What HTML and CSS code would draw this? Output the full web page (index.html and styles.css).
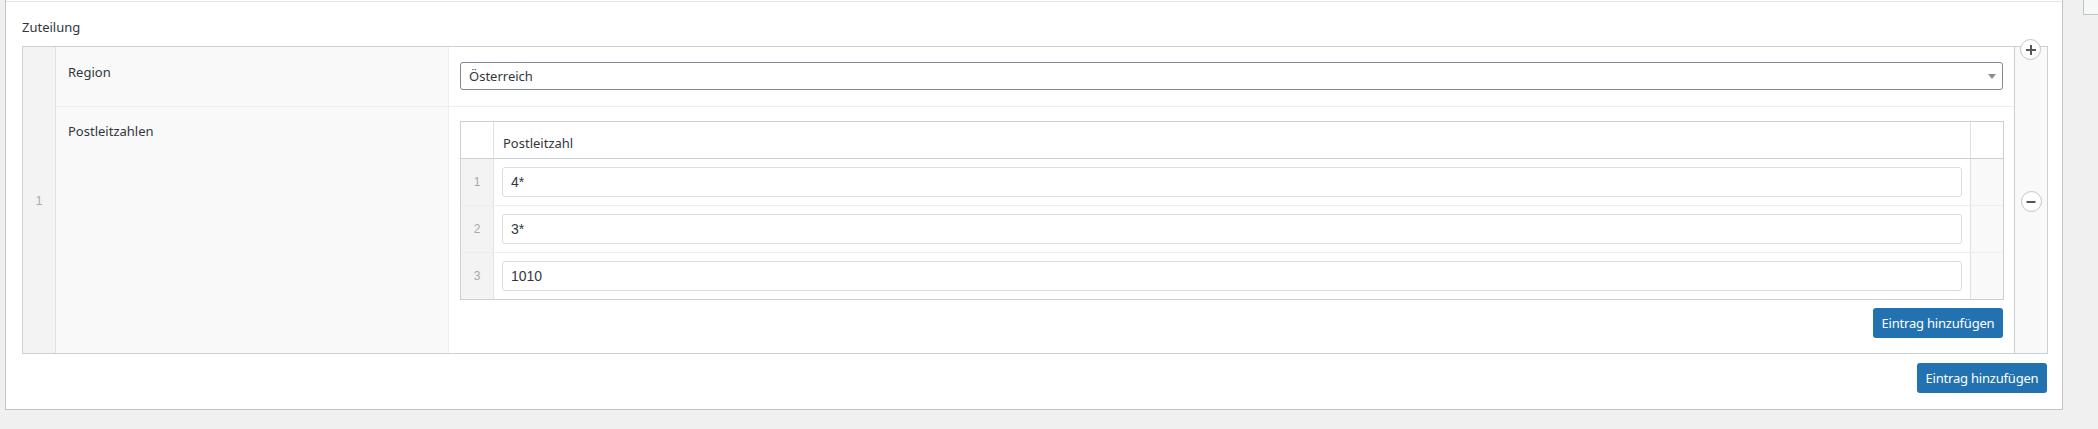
FILE: index.html
```html
<!DOCTYPE html>
<html lang="de">
<head>
    <meta charset="UTF-8">
    <title>Zuteilung</title>
    <link rel="stylesheet" href="styles.css">
</head>
<body>
    <div class="page">
        <div class="panel">
            <div class="panel-line"></div>
            <div class="field-label">Zuteilung</div>

            <div class="repeater">
                <div class="rep-num">1</div>

                <div class="rep-fields">
                    <div class="sub-row region-row">
                        <div class="sub-label">Region</div>
                        <div class="sub-input">
                            <div class="select-wrap">
                                <select class="select">
                                    <option>Österreich</option>
                                </select>
                            </div>
                        </div>
                    </div>

                    <div class="sub-row plz-row">
                        <div class="sub-label">Postleitzahlen</div>
                        <div class="sub-input">
                            <div class="inner-table">
                                <div class="inner-head">
                                    <div class="in-num"></div>
                                    <div class="in-cell head-cell">Postleitzahl</div>
                                    <div class="in-act"></div>
                                </div>
                                <div class="inner-row">
                                    <div class="in-num">1</div>
                                    <div class="in-cell"><input class="text-input" type="text" value="4*"></div>
                                    <div class="in-act"></div>
                                </div>
                                <div class="inner-row">
                                    <div class="in-num">2</div>
                                    <div class="in-cell"><input class="text-input" type="text" value="3*"></div>
                                    <div class="in-act"></div>
                                </div>
                                <div class="inner-row">
                                    <div class="in-num">3</div>
                                    <div class="in-cell"><input class="text-input" type="text" value="1010"></div>
                                    <div class="in-act"></div>
                                </div>
                            </div>
                            <div class="btn-bar">
                                <button class="btn">Eintrag hinzufügen</button>
                            </div>
                        </div>
                    </div>
                </div>

                <div class="rep-actions">
                    <span class="circle-btn add-btn">
                        <svg width="14" height="14" viewBox="0 0 14 14"><path d="M7 2v10M2 7h10" stroke="#50575e" stroke-width="2"/></svg>
                    </span>
                    <span class="circle-btn remove-btn">
                        <svg width="14" height="14" viewBox="0 0 14 14"><path d="M2.5 7h9" stroke="#50575e" stroke-width="2"/></svg>
                    </span>
                </div>
            </div>

            <div class="btn-bar outer-bar">
                <button class="btn">Eintrag hinzufügen</button>
            </div>
        </div>

        <div class="side-box"></div>
    </div>
</body>
</html>
```

FILE: styles.css
```css
* {
    margin: 0;
    padding: 0;
    box-sizing: border-box;
}

body {
    font-family: "Noto Sans", "Open Sans", sans-serif;
    font-size: 13px;
    line-height: 20px;
    color: #32373c;
    background: #f0f0f1;
    overflow: hidden;
}

.page {
    display: flex;
    align-items: flex-start;
    padding-left: 5px;
}

.panel {
    width: 2058px;
    flex-shrink: 0;
    background: #fff;
    border: 1px solid #c3c4c7;
    border-top: none;
    padding: 0 14px 16px 16px;
}

.panel-line {
    height: 1px;
    margin: 1px -14px 0 -16px;
    background: #e2e4e7;
}

.field-label {
    margin-top: 15px;
    margin-bottom: 9px;
}

/* repeater */
.repeater {
    display: flex;
    border: 1px solid #ccd0d4;
}

.rep-num {
    width: 33px;
    flex-shrink: 0;
    background: #f3f3f3;
    border-right: 1px solid #e1e1e1;
    display: flex;
    align-items: center;
    justify-content: center;
    padding-top: 2px;
    color: #aaa;
    font-family: "Liberation Sans", Arial, sans-serif;
    font-size: 12px;
}

.rep-fields {
    flex: 1;
}

.sub-row {
    display: flex;
}

.region-row {
    border-bottom: 1px solid #eee;
}

.sub-label {
    width: 393px;
    flex-shrink: 0;
    background: #f9f9f9;
    border-right: 1px solid #eee;
    padding: 15px 12px;
}

.plz-row .sub-label {
    padding-top: 14px;
}

.sub-input {
    flex: 1;
    padding: 15px 10px 16px 11px;
}

.plz-row .sub-input {
    padding: 14px 10px 15px 11px;
}

.select-wrap {
    position: relative;
    margin-right: 1px;
}

.select-wrap::after {
    content: "";
    position: absolute;
    right: 7px;
    top: 12px;
    border-left: 4px solid transparent;
    border-right: 4px solid transparent;
    border-top: 5px solid #8c8f94;
}

.select {
    display: block;
    width: 100%;
    height: 28px;
    appearance: none;
    -webkit-appearance: none;
    background: #fff;
    border: 1px solid #7e8993;
    border-radius: 3px;
    padding: 0 24px 0 8px;
    font-family: inherit;
    font-size: 13px;
    color: #32373c;
    outline: none;
}

.rep-actions {
    position: relative;
    width: 33px;
    flex-shrink: 0;
    background: #f9f9f9;
    border-left: 1px solid #ccd0d4;
    display: flex;
    align-items: center;
    justify-content: center;
}

.circle-btn {
    display: flex;
    align-items: center;
    justify-content: center;
    width: 21px;
    height: 21px;
    border-radius: 50%;
    background: #fff;
    border: 1px solid #c3c4c7;
}

.remove-btn {
    margin-top: 3px;
}

.add-btn {
    position: absolute;
    top: -8px;
    left: 5px;
}

/* inner table */
.inner-table {
    border: 1px solid #ccd0d4;
}

.inner-head,
.inner-row {
    display: flex;
}

.inner-head {
    border-bottom: 1px solid #ccd0d4;
    height: 37px;
}

.inner-row {
    height: 47px;
    border-bottom: 1px solid #eee;
}

.inner-row:last-child {
    border-bottom: none;
    height: 46px;
}

.in-num {
    width: 33px;
    flex-shrink: 0;
    border-right: 1px solid #e1e1e1;
    display: flex;
    align-items: center;
    justify-content: center;
    color: #aaa;
    font-family: "Liberation Sans", Arial, sans-serif;
    font-size: 12px;
}

.inner-row .in-num {
    background: #f3f3f3;
}

.in-cell {
    flex: 1;
    padding: 8px;
}

.head-cell {
    padding: 11px 8px 0 9px;
}

.in-act {
    width: 33px;
    flex-shrink: 0;
    border-left: 1px solid #e1e1e1;
}

.inner-row .in-act {
    background: #f9f9f9;
}

.text-input {
    display: block;
    width: 100%;
    height: 30px;
    border: 1px solid #ddd;
    border-radius: 3px;
    padding: 0 8px;
    font-family: "Liberation Sans", Arial, sans-serif;
    font-size: 14px;
    color: #32373c;
    outline: none;
}

/* buttons */
.btn-bar {
    display: flex;
    justify-content: flex-end;
    margin-top: 8px;
}

.plz-row .btn-bar {
    padding-right: 1px;
}

.outer-bar {
    margin-top: 9px;
    padding-right: 1px;
}

.btn {
    width: 130px;
    height: 30px;
    background: #2271b1;
    color: #fff;
    border: none;
    border-radius: 3px;
    font-family: inherit;
    font-size: 13px;
    letter-spacing: -0.2px;
    cursor: pointer;
}

.side-box {
    width: 16px;
    height: 16px;
    flex-shrink: 0;
    margin-left: 20px;
    margin-top: -1px;
    background: #f6f7f7;
    border: 1px solid #c3c4c7;
}
```
